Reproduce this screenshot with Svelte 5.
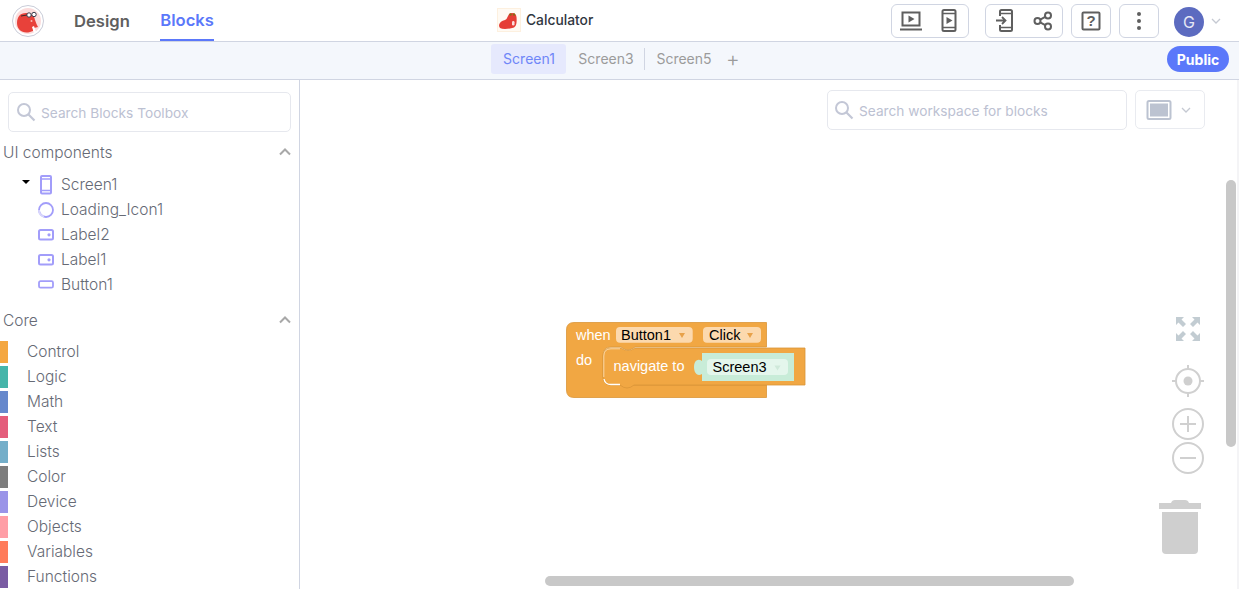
<script>
  const tree = [
    { name: 'Loading_Icon1', kind: 'loading' },
    { name: 'Label2', kind: 'label' },
    { name: 'Label1', kind: 'label' },
    { name: 'Button1', kind: 'button' }
  ];
  const core = [
    ['Control', '#f4a741'], ['Logic', '#45b5aa'], ['Math', '#6688cc'], ['Text', '#e45d7b'],
    ['Lists', '#74aec9'], ['Color', '#7d7d7d'], ['Device', '#9a94e8'], ['Objects', '#ff9ea6'],
    ['Variables', '#ff7b5a'], ['Functions', '#7a5ca3']
  ];
</script>

<div class="page">
  <header class="topbar">
    <div class="left">
      <svg class="logo" viewBox="0 0 32 32" width="32" height="32" aria-hidden="true">
        <circle cx="16" cy="16" r="15.500" fill="#fff" stroke="#c9ccd8"/>
        <circle cx="16" cy="16" r="13" fill="#fbdcdc"/>
        <path d="M5 18c0-6 3-10 9-10 5 0 8 2 9 7 1 3 2 5 3 7l-4 1-1 3-3 1c-7 2-13-2-13-9z" fill="#e8413a"/>
        <path d="M9 11l6-1" stroke="#3a2a2a" stroke-width="1"/>
        <circle cx="17" cy="10" r="2.200" fill="#fff" stroke="#3a3a4a" stroke-width="1"/>
        <circle cx="22" cy="9.500" r="2.200" fill="#fff" stroke="#3a3a4a" stroke-width="1"/>
        <path d="M20 22l2-1 2 6-2 1z" fill="#fff"/>
        <circle cx="19.500" cy="16" r="1" fill="#f9b7b0"/>
      </svg>
      <nav class="nav">
        <span class="navitem">Design</span>
        <span class="navitem active">Blocks</span>
      </nav>
    </div>
    <div class="project">
      <svg viewBox="0 0 24 24" width="24" height="24" aria-hidden="true">
        <rect x="0.500" y="0.500" width="23" height="23" fill="#fffaf3" stroke="#fdf0df"/>
        <path d="M2 17Q3 13 8 12Q10 11 11 8Q12 5 15 5Q19 5 19.500 9Q20 14 19 17Q18 20 13 20.500Q6 21.500 3 20Q2 19 2 17Z" fill="#e53e36"/>
        <circle cx="13.500" cy="6.500" r="1.200" fill="#8a6a10"/><circle cx="17" cy="6.500" r="1.200" fill="#8a6a10"/>
        <rect x="15" y="13" width="2.500" height="4.500" rx="1.200" fill="#fbdcdc"/>
      </svg>
      <span>Calculator</span>
    </div>
    <div class="actions">
      <div class="group wide">
        <svg viewBox="0 0 24 24" width="24" height="24" aria-hidden="true"><path d="M3.500 3.500h17v13h-17z" fill="none" stroke="#5f5f5f" stroke-width="2"/><path d="M1 20.500h22" stroke="#5f5f5f" stroke-width="2"/><path d="M9.500 6.500l6 3.500-6 3.500z" fill="#5f5f5f"/></svg>
        <svg viewBox="0 0 24 24" width="24" height="24" aria-hidden="true"><rect x="5.500" y="1" width="13" height="21" rx="1.500" fill="none" stroke="#5f5f5f" stroke-width="2"/><path d="M6 4.500h12M6 18.500h12" stroke="#5f5f5f" stroke-width="1.500"/><path d="M9.500 8l6 3.500-6 3.500z" fill="#5f5f5f"/></svg>
      </div>
      <div class="group wide">
        <svg viewBox="0 0 24 24" width="24" height="24" aria-hidden="true"><path d="M7 7V2.500q0-1.500 1.500-1.500h9q1.500 0 1.500 1.500v18q0 1.500-1.500 1.500h-9Q7 22 7 20.500V16" fill="none" stroke="#5f5f5f" stroke-width="2"/><path d="M7 4.500h12M7 18.500h12" stroke="#5f5f5f" stroke-width="1.500"/><path d="M3 11.500h9M9 8l3.500 3.500L9 15" fill="none" stroke="#5f5f5f" stroke-width="1.800"/></svg>
        <svg viewBox="0 0 24 24" width="24" height="24" aria-hidden="true"><g fill="none" stroke="#5f5f5f" stroke-width="2"><circle cx="6.500" cy="12" r="3"/><circle cx="17" cy="6.500" r="3"/><circle cx="17" cy="17.500" r="3"/><path d="M9.200 10.600l5-2.700M9.200 13.400l5 2.700"/></g></svg>
      </div>
      <div class="group single">
        <svg viewBox="0 0 24 24" width="24" height="24" aria-hidden="true"><rect x="3.500" y="3.500" width="17" height="17" rx="1" fill="none" stroke="#5f5f5f" stroke-width="2"/><text x="12" y="17" text-anchor="middle" class="qmark">?</text></svg>
      </div>
      <div class="group single">
        <svg viewBox="0 0 24 24" width="24" height="24" aria-hidden="true"><g fill="#5f5f5f"><circle cx="12" cy="5" r="2"/><circle cx="12" cy="12" r="2"/><circle cx="12" cy="19" r="2"/></g></svg>
      </div>
      <div class="avatar">G</div>
      <svg class="chev" viewBox="0 0 10 6" width="10" height="6" aria-hidden="true"><path d="M1 1l4 4 4-4" fill="none" stroke="#c5c9d2" stroke-width="1.300"/></svg>
    </div>
  </header>

  <div class="tabbar">
    <div class="tabs">
      <span class="tab current">Screen1</span>
      <span class="tab sep">Screen3</span>
      <span class="tab last">Screen5</span>
      <span class="plus">+</span>
    </div>
    <span class="public">Public</span>
  </div>

  <main class="main">
    <aside class="side">
      <div class="searchbox">
        <svg viewBox="0 0 20 20" width="20" height="20" aria-hidden="true"><circle cx="8" cy="8" r="6" fill="none" stroke="#c3c7d6" stroke-width="2"/><path d="M12.500 12.500l6 6" stroke="#c3c7d6" stroke-width="2.200"/></svg>
        <span class="ph">Search Blocks Toolbox</span>
      </div>

      <div class="sechead first"><span>UI components</span>
        <svg viewBox="0 0 12 8" width="12" height="8" aria-hidden="true"><path d="M1 6.500l5-5 5 5" fill="none" stroke="#a8a8a8" stroke-width="2"/></svg>
      </div>
      <div class="tree">
        <div class="treerow">
          <i class="caret"></i>
          <svg class="ti" viewBox="0 0 18 20" width="18" height="20" aria-hidden="true"><rect x="4" y="1" width="10" height="17.500" rx="1" fill="none" stroke="#a29dfa" stroke-width="2"/><path d="M4 4h10M4 15.500h10" stroke="#a29dfa" stroke-width="1.500"/></svg>
          <span>Screen1</span>
        </div>
        {#each tree as t}
          <div class="treerow">
            {#if t.kind === 'loading'}
              <svg class="ti" viewBox="0 0 18 18" width="18" height="18" aria-hidden="true"><circle cx="9" cy="9" r="7" fill="none" stroke="#a29dfa" stroke-width="1.800"/><path d="M2 9a7 7 0 0 0 5 6.700" fill="none" stroke="#d9d7fc" stroke-width="1.800"/></svg>
            {:else if t.kind === 'label'}
              <svg class="ti" viewBox="0 0 18 18" width="18" height="18" aria-hidden="true"><rect x="2" y="4" width="14" height="9.500" rx="1.500" fill="none" stroke="#a29dfa" stroke-width="2"/><circle cx="12" cy="8.800" r="1.600" fill="#a29dfa"/></svg>
            {:else}
              <svg class="ti" viewBox="0 0 18 18" width="18" height="18" aria-hidden="true"><rect x="2" y="5.200" width="14" height="6.500" rx="1.500" fill="none" stroke="#a29dfa" stroke-width="1.800"/></svg>
            {/if}
            <span>{t.name}</span>
          </div>
        {/each}
      </div>

      <div class="sechead"><span>Core</span>
        <svg viewBox="0 0 12 8" width="12" height="8" aria-hidden="true"><path d="M1 6.500l5-5 5 5" fill="none" stroke="#a8a8a8" stroke-width="2"/></svg>
      </div>
      <div class="core">
        {#each core as c}
          <div class="corerow"><i class="swatch" style="background:{c[1]}"></i><span>{c[0]}</span></div>
        {/each}
      </div>
    </aside>

    <section class="work">
      <div class="wsearch">
        <svg viewBox="0 0 20 20" width="20" height="20" aria-hidden="true"><circle cx="8" cy="8" r="6" fill="none" stroke="#c3c7d6" stroke-width="2"/><path d="M12.500 12.500l6 6" stroke="#c3c7d6" stroke-width="2.200"/></svg>
        <span class="ph">Search workspace for blocks</span>
      </div>
      <div class="device">
        <svg viewBox="0 0 26 20" width="26" height="20" aria-hidden="true"><rect x="1.500" y="1" width="23" height="18" rx="1.500" fill="#fff" stroke="#bcc3d1" stroke-width="2"/><rect x="4" y="3.500" width="18" height="13" fill="#bcc3d1"/></svg>
        <svg viewBox="0 0 10 6" width="10" height="6" aria-hidden="true"><path d="M1 1l4 4 4-4" fill="none" stroke="#c5c9d2" stroke-width="1.300"/></svg>
      </div>

      <svg class="blocks" viewBox="0 0 250 90" width="250" height="90" aria-hidden="true">
        <path d="M8 .5H200.500V25H69Q62 31 55 25H45Q37 25 37 33V55Q37 63 45 63H200.500V75.500H8Q.5 75.500 .5 68V8Q.5 .5 8 .5Z" fill="#f1a743" stroke="#d99638" stroke-width=".8"/>
        <path d="M45 26H55Q62 31 69 26H239V63H68Q61 69 54 63H45Q37 63 37 55V34Q37 26 45 26Z" fill="#f1a743" stroke="#d99638" stroke-width=".8"/>
        <path d="M37.800 55V34Q37.800 26.800 45 26.800H54" fill="none" stroke="#fbd9a8" stroke-width="1"/>
        <path d="M38 57Q39 62.500 45 62.500H54" fill="none" stroke="#fff" stroke-width="1.300"/>
        <rect x="50" y="5" width="76.700" height="15.700" rx="4" fill="#fcd9ae"/>
        <rect x="137" y="5" width="58" height="15.700" rx="4" fill="#fcd9ae"/>
        <path d="M113 11h6l-3 5z" fill="#e8a24a"/>
        <path d="M181 11h6l-3 5z" fill="#e8a24a"/>
        <text x="10" y="18" class="bw">when</text>
        <text x="55" y="18" class="bk">Button1</text>
        <text x="143" y="18" class="bk">Click</text>
        <text x="10" y="43" class="bw">do</text>
        <text x="47.500" y="49" class="bw">navigate to</text>
        <path d="M136 31H228V59H136V52Q133 54 130.500 52Q128 50 128 45Q128 40 130.500 38.500Q133 37 136 39Z" fill="#c8ecd8"/>
        <rect x="141" y="37" width="81" height="16" rx="4" fill="#e4f6ec"/>
        <path d="M208.500 43.500h6l-3 5z" fill="#cfe9da"/>
        <text x="146.500" y="50" class="bk">Screen3</text>
      </svg>

      <svg class="fit" viewBox="0 0 26 26" width="26" height="26" aria-hidden="true">
        <g fill="#c2ccd2">
          <path d="M1 1h8L6.500 3.500 11 8l-3 3-4.500-4.500L1 9z"/>
          <path d="M25 1h-8l2.500 2.500L15 8l3 3 4.500-4.500L25 9z"/>
          <path d="M1 25h8l-2.500-2.500L11 18l-3-3-4.500 4.500L1 17z"/>
          <path d="M25 25h-8l2.500-2.500L15 18l3-3 4.500 4.500L25 17z"/>
        </g>
      </svg>
      <svg class="center" viewBox="0 0 32 32" width="32" height="32" aria-hidden="true">
        <circle cx="16" cy="16" r="12" fill="none" stroke="#d0d0d0" stroke-width="2"/>
        <circle cx="16" cy="16" r="4.500" fill="#cfcfcf"/>
        <path d="M16 0v5M16 27v5M0 16h5M27 16h5" stroke="#d0d0d0" stroke-width="2"/>
      </svg>
      <svg class="zoomin" viewBox="0 0 32 32" width="32" height="32" aria-hidden="true">
        <circle cx="16" cy="16" r="15" fill="#fff" stroke="#d0d0d0" stroke-width="2"/>
        <path d="M8 16h16M16 8v16" stroke="#d0d0d0" stroke-width="2"/>
      </svg>
      <svg class="zoomout" viewBox="0 0 32 32" width="32" height="32" aria-hidden="true">
        <circle cx="16" cy="16" r="15" fill="#fff" stroke="#d0d0d0" stroke-width="2"/>
        <path d="M8 16h16" stroke="#d0d0d0" stroke-width="2"/>
      </svg>
      <svg class="trash" viewBox="0 0 42 54" width="42" height="54" aria-hidden="true">
        <path d="M12 3q1-3 4-3h10q3 0 4 3h12v6H0V3z" fill="#cfcfcf"/>
        <path d="M3 12h36v38q0 4-4 4H7q-4 0-4-4z" fill="#cfcfcf"/>
      </svg>

      <i class="vbar"></i>
      <i class="hbar"></i>
    </section>
  </main>
</div>

<style>
  :global(body) { margin: 0; background: #fff; }
  .page { width: 1239px; height: 589px; overflow: hidden; display: flex; flex-direction: column; font-family: Inter, "Noto Sans", sans-serif; color: #5f5f5f; }

  .topbar { height: 41px; flex: none; border-bottom: 1px solid #d0d5e2; display: flex; align-items: center; position: relative; background: #fff; }
  .left { display: flex; align-items: center; padding-left: 12px; height: 100%; }
  .logo { flex: none; }
  .nav { display: flex; margin-left: 30px; gap: 30.500px; height: 100%; }
  .navitem { font-size: 16.600px; font-weight: 600; color: #5f5f5f; height: 41px; line-height: 42px; box-sizing: border-box; }
  .navitem.active { color: #5b78fa; border-bottom: 2px solid #5b78fa; line-height: 40px; }
  .project { position: absolute; left: 497px; top: 8px; display: flex; align-items: center; gap: 5px; font-size: 13.800px; font-weight: 500; color: #2f3640; }
  .actions { position: absolute; left: 891px; top: 4px; display: flex; align-items: center; }
  .group { height: 32px; border: 1px solid #d0d5e2; border-radius: 6px; box-sizing: content-box; display: flex; align-items: center; justify-content: center; margin-right: 8px; }
  .group.wide { width: 76px; gap: 14px; margin-right: 16px; }
  .group.wide:nth-child(2) { margin-right: 8px; }
  .group.single { width: 38px; }
  .group.single:nth-child(4) { margin-right: 15px; }
  .qmark { font: 700 15px "Liberation Sans", sans-serif; fill: #5f5f5f; }
  .avatar { width: 30px; height: 30px; margin-top: 2px; border-radius: 50%; background: #5c6bc0; color: #e6e8f5; font-size: 16px; display: flex; align-items: center; justify-content: center; }
  .chev { margin-left: 7px; }

  .tabbar { height: 37px; flex: none; background: #f4f7fc; border-bottom: 1px solid #d0d5e2; position: relative; display: flex; align-items: center; }
  .tabs { position: absolute; left: 491px; top: 2px; height: 30px; display: flex; align-items: center; font-size: 14px; color: #9b9b9b; }
  .tab { height: 30px; line-height: 30px; box-sizing: border-box; width: 75px; text-align: center; white-space: nowrap; }
  .tab.current { background: #e6e9fd; color: #6f86f8; border-radius: 3px; padding-left: 1px; }
  .tab.sep { width: 79px; padding-left: 1px; position: relative; }
  .tab.sep::after { content: ""; position: absolute; top: 4px; right: 0; height: 22px; width: 1px; background: #d0d5e2; }
  .tab.last { padding-left: 3px; }
  .plus { margin-left: 6px; font-size: 21px; line-height: 30px; color: #9b9b9b; font-weight: 300; }
  .public { position: absolute; left: 1167px; top: 4px; width: 62px; height: 26px; background: #5b78fa; color: #fff; font-weight: 700; font-size: 14px; border-radius: 13px; display: flex; align-items: center; justify-content: center; }

  .main { flex: 1; display: flex; min-height: 0; }
  .side { width: 299px; flex: none; border-right: 1px solid #d0d5e2; overflow: hidden; font-size: 15.500px; font-weight: 300; color: #666a75; }
  .searchbox { margin: 12px 8px 0; height: 38px; border: 1px solid #e6e8ee; border-radius: 5px; display: flex; align-items: center; padding-left: 7px; gap: 5px; color: #bcc1d2; font-size: 13.700px; font-weight: 400; }
  .ph { padding-top: 2px; }
  .sechead { display: flex; justify-content: space-between; align-items: center; height: 20px; padding: 0 8px 0 3px; margin-top: 13px; }
  .sechead.first { margin-top: 10px; }
  .tree { margin-top: 10px; }
  .treerow { height: 25px; display: flex; align-items: center; padding-left: 37px; position: relative; gap: 6px; }
  .caret { position: absolute; left: 22px; top: 8px; width: 0; height: 0; border-left: 4px solid transparent; border-right: 4px solid transparent; border-top: 4px solid #000; }
  .ti { flex: none; }
  .core { margin-top: 9px; }
  .corerow { height: 25px; display: flex; align-items: center; gap: 19px; }
  .swatch { width: 8px; height: 22px; flex: none; }

  .work { flex: 1; position: relative; background: #fff; border-right: 2px solid #f4f4f6; }
  .wsearch { position: absolute; left: 527px; top: 10px; height: 38px; width: 292px; border: 1px solid #e6e8ee; border-radius: 5px; display: flex; align-items: center; padding-left: 6px; gap: 5px; color: #bcc1d2; font-size: 13.700px; }
  .device { position: absolute; left: 835px; top: 10px; width: 58px; padding-left: 10px; height: 37px; border: 1px solid #e9ebf0; border-radius: 5px; display: flex; align-items: center; gap: 9px; }
  .blocks { position: absolute; left: 266px; top: 242px; }
  .bw { font: 14.500px "Liberation Sans", sans-serif; fill: #fff; }
  .bk { font: 14.500px "Liberation Sans", sans-serif; fill: #000; }
  .fit { position: absolute; left: 875px; top: 236px; }
  .center { position: absolute; left: 872px; top: 285px; }
  .zoomin { position: absolute; left: 872px; top: 328px; }
  .zoomout { position: absolute; left: 872px; top: 362px; }
  .trash { position: absolute; left: 859px; top: 420px; }
  .vbar { position: absolute; left: 926px; top: 100px; width: 10px; height: 267px; background: #c8c8c8; border-radius: 5px; }
  .hbar { position: absolute; left: 245px; top: 496px; width: 529px; height: 10px; background: #c8c8c8; border-radius: 5px; }
</style>
